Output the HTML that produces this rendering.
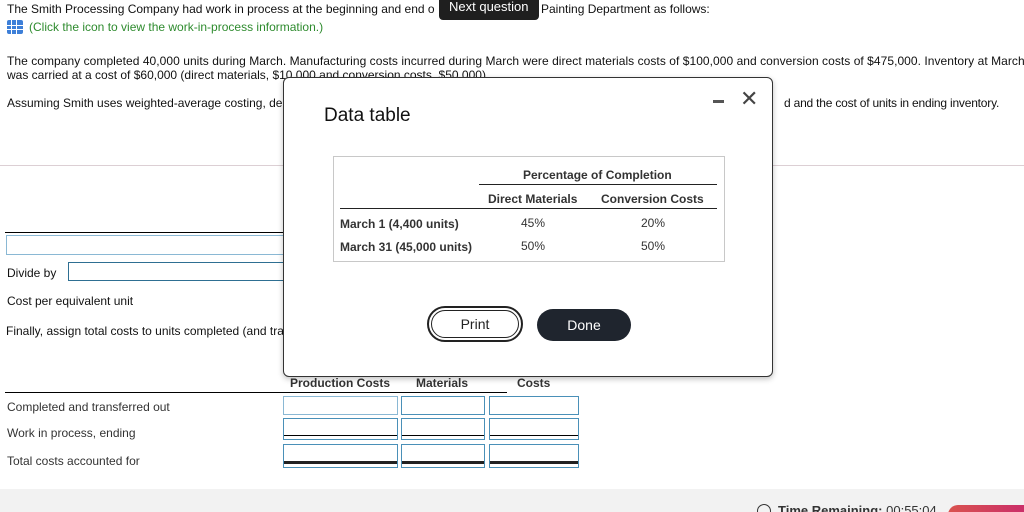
<!DOCTYPE html>
<html style="width:1024px;height:512px;overflow:hidden"><head><meta charset="utf-8">
<style>
*{margin:0;padding:0;box-sizing:border-box}
body{width:1024px;height:512px;overflow:hidden;background:#fff;font-family:"Liberation Sans",Arial,sans-serif;color:#111;position:relative;font-size:12px}
.a{position:absolute;white-space:nowrap}
.inp{position:absolute;border:1px solid #4a90b8;background:#fff}
.hl{position:absolute;height:1px;background:#000}
</style></head><body>
<div class="a" style="left:7px;top:2px">The Smith Processing Company had work in process at the beginning and end o</div>
<div class="a" style="left:541px;top:2px">Painting Department as follows:</div>
<div class="a" style="left:439px;top:-4px;width:100px;height:24px;background:#1f1f1f;color:#fff;border-radius:4px;font-size:13px;padding:3px 0 0 10px">Next question</div>
<div class="a" style="left:7px;top:20px;width:16px;height:14px;background:#3d7fd8;border-radius:2px;
background-image:linear-gradient(90deg,transparent 4px,#fff 4px,#fff 5px,transparent 5px,transparent 9px,#fff 9px,#fff 10px,transparent 10px),linear-gradient(0deg,transparent 4px,#fff 4px,#fff 5px,transparent 5px,transparent 8px,#fff 8px,#fff 9px,transparent 9px)"></div>
<div class="a" style="left:29px;top:20px;color:#2e8b2e">(Click the icon to view the work-in-process information.)</div>
<div class="a" style="left:7px;top:54px;letter-spacing:0.05px">The company completed 40,000 units during March. Manufacturing costs incurred during March were direct materials costs of $100,000 and conversion costs of $475,000. Inventory at March</div>
<div class="a" style="left:7px;top:68px">was carried at a cost of $60,000 (direct materials, $10,000 and conversion costs, $50,000).</div>
<div class="a" style="left:7px;top:96px">Assuming Smith uses weighted-average costing, de</div>
<div class="a" style="left:784px;top:96px;letter-spacing:-0.2px">d and the cost of units in ending inventory.</div>
<div class="a" style="left:0;top:165px;width:1024px;height:1px;background:#dccfd4"></div>
<div class="hl" style="left:5px;top:232px;width:280px"></div>
<div class="inp" style="left:6px;top:235px;width:280px;height:20px;border-color:#8ab8d4"></div>
<div class="a" style="left:7px;top:266px">Divide by</div>
<div class="inp" style="left:68px;top:262px;width:220px;height:19px;border-color:#2e6f92"></div>
<div class="a" style="left:7px;top:294px">Cost per equivalent unit</div>
<div class="a" style="left:6px;top:324px">Finally, assign total costs to units completed (and tra</div>
<div class="a" style="left:290px;top:376px;font-weight:bold;color:#333">Production Costs</div>
<div class="a" style="left:416px;top:376px;font-weight:bold;color:#333">Materials</div>
<div class="a" style="left:517px;top:376px;font-weight:bold;color:#333">Costs</div>
<div class="hl" style="left:5px;top:392px;width:502px"></div>
<div class="a" style="left:7px;top:400px;color:#333">Completed and transferred out</div>
<div class="a" style="left:7px;top:426px;color:#333">Work in process, ending</div>
<div class="a" style="left:7px;top:454px;color:#333">Total costs accounted for</div>
<div class="inp" style="left:283px;top:396px;width:115px;height:19px;border-color:#8ab8d4"></div>
<div class="inp" style="left:401px;top:396px;width:84px;height:19px"></div>
<div class="inp" style="left:489px;top:396px;width:90px;height:19px"></div>
<div class="inp" style="left:283px;top:418px;width:115px;height:22px;box-shadow:inset 0 -3px 0 #fff,inset 0 -4px 0 #000"></div>
<div class="inp" style="left:401px;top:418px;width:84px;height:22px;box-shadow:inset 0 -3px 0 #fff,inset 0 -4px 0 #000"></div>
<div class="inp" style="left:489px;top:418px;width:90px;height:22px;box-shadow:inset 0 -3px 0 #fff,inset 0 -4px 0 #000"></div>
<div class="inp" style="left:283px;top:444px;width:115px;height:24px;box-shadow:inset 0 -3px 0 #fff,inset 0 -6px 0 #222"></div>
<div class="inp" style="left:401px;top:444px;width:84px;height:24px;box-shadow:inset 0 -3px 0 #fff,inset 0 -6px 0 #222"></div>
<div class="inp" style="left:489px;top:444px;width:90px;height:24px;box-shadow:inset 0 -3px 0 #fff,inset 0 -6px 0 #222"></div>
<div class="a" style="left:0;top:489px;width:1024px;height:23px;background:#f2f2f2;overflow:hidden">
  <div class="a" style="left:757px;top:15px;width:14px;height:14px;border:1.5px solid #333;border-radius:50%"></div>
  <div class="a" style="left:778px;top:14px;font-size:13px;font-weight:bold;color:#333">Time Remaining: <span style="font-weight:normal">00:55:04</span></div>
  <div class="a" style="left:948px;top:16px;width:90px;height:20px;border-radius:10px;background:linear-gradient(90deg,#d9534f,#c8286e)"></div>
</div>

<div class="a" style="left:283px;top:77px;width:490px;height:300px;background:#fff;border:1.5px solid #333;border-radius:6px;box-shadow:0 2px 6px rgba(0,0,0,.25)">
  <div class="a" style="left:40px;top:27px;font-size:19px;color:#111">Data table</div>
  <div class="a" style="left:429px;top:22px;width:11px;height:3px;background:#555"></div>
  <div class="a" style="left:456px;top:8px;font-size:22px;color:#444">✕</div>
  <div class="a" style="left:49px;top:78px;width:392px;height:106px;border:1px solid #c8c8c8;font-size:12px;font-weight:bold;color:#333">
    <div class="a" style="left:189px;top:11px">Percentage of Completion</div>
    <div class="hl" style="left:145px;top:27px;width:238px;background:#222"></div>
    <div class="a" style="left:154px;top:35px">Direct Materials</div>
    <div class="a" style="left:267px;top:35px">Conversion Costs</div>
    <div class="hl" style="left:6px;top:51px;width:377px;background:#222"></div>
    <div class="a" style="left:6px;top:60px">March 1 (4,400 units)</div>
    <div class="a" style="left:6px;top:83px">March 31 (45,000 units)</div>
    <div class="a" style="left:187px;top:59px;font-weight:normal">45%</div>
    <div class="a" style="left:307px;top:59px;font-weight:normal">20%</div>
    <div class="a" style="left:187px;top:82px;font-weight:normal">50%</div>
    <div class="a" style="left:307px;top:82px;font-weight:normal">50%</div>
  </div>
  <div class="a" style="left:143px;top:228px;width:96px;height:36px;border:2px solid #222;border-radius:18px;padding:2px">
    <div style="width:100%;height:100%;border:1.5px solid #222;border-radius:15px;text-align:center;font-size:14px;line-height:26px;color:#222">Print</div>
  </div>
  <div class="a" style="left:253px;top:231px;width:94px;height:32px;background:#1f252e;border-radius:16px;color:#fff;text-align:center;font-size:14px;line-height:32px">Done</div>
</div>
</body></html>
